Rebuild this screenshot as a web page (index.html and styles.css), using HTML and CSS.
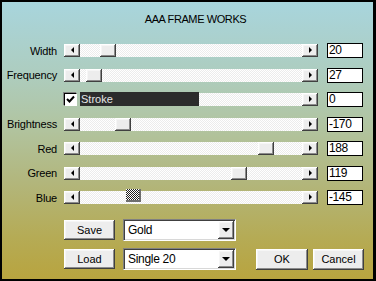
FILE: index.html
```html
<!DOCTYPE html>
<html lang="en">
<head>
    <meta charset="UTF-8">
    <title>AAA Frame Works</title>
    <link rel="stylesheet" href="styles.css">
</head>
<body>
    <div class="window">
        <div class="title">AAA FRAME WORKS</div>

        <!-- Slider rows -->
        <div class="rows">
            <div class="row">
                <span class="label">Width</span>
                <div class="scroll">
                    <span class="btn arrow-btn"><i class="arrow-left"></i></span>
                    <span class="track"><span class="thumb" style="left: 20px"></span></span>
                    <span class="btn arrow-btn"><i class="arrow-right"></i></span>
                </div>
                <span class="value">20</span>
            </div>
            <div class="row">
                <span class="label">Frequency</span>
                <div class="scroll">
                    <span class="btn arrow-btn"><i class="arrow-left"></i></span>
                    <span class="track"><span class="thumb" style="left: 6px"></span></span>
                    <span class="btn arrow-btn"><i class="arrow-right"></i></span>
                </div>
                <span class="value">27</span>
            </div>
            <div class="row">
                <span class="label"></span>
                <div class="scroll">
                    <span class="checkbox">
                        <svg width="9" height="9" viewBox="0 0 9 9"><polyline points="1,4 3.5,6.5 8,1.5" fill="none" stroke="#000" stroke-width="2"/></svg>
                    </span>
                    <span class="track"><span class="stroke-bar">Stroke</span></span>
                    <span class="btn arrow-btn"><i class="arrow-right"></i></span>
                </div>
                <span class="value">0</span>
            </div>
            <div class="row">
                <span class="label">Brightness</span>
                <div class="scroll">
                    <span class="btn arrow-btn"><i class="arrow-left"></i></span>
                    <span class="track"><span class="thumb" style="left: 35px"></span></span>
                    <span class="btn arrow-btn"><i class="arrow-right"></i></span>
                </div>
                <span class="value">-170</span>
            </div>
            <div class="row">
                <span class="label">Red</span>
                <div class="scroll">
                    <span class="btn arrow-btn"><i class="arrow-left"></i></span>
                    <span class="track"><span class="thumb" style="left: 178px"></span></span>
                    <span class="btn arrow-btn"><i class="arrow-right"></i></span>
                </div>
                <span class="value">188</span>
            </div>
            <div class="row">
                <span class="label">Green</span>
                <div class="scroll">
                    <span class="btn arrow-btn"><i class="arrow-left"></i></span>
                    <span class="track"><span class="thumb" style="left: 151px"></span></span>
                    <span class="btn arrow-btn"><i class="arrow-right"></i></span>
                </div>
                <span class="value">119</span>
            </div>
            <div class="row">
                <span class="label">Blue</span>
                <div class="scroll">
                    <span class="btn arrow-btn"><i class="arrow-left"></i></span>
                    <span class="track"><span class="thumb focused" style="left: 46px"></span></span>
                    <span class="btn arrow-btn"><i class="arrow-right"></i></span>
                </div>
                <span class="value">-145</span>
            </div>
        </div>

        <!-- Presets and dialog buttons -->
        <div class="actions">
            <div class="action-row">
                <button class="btn push save-btn">Save</button>
                <div class="combo">
                    <span class="combo-text">Gold</span>
                    <span class="btn combo-btn"><i class="arrow-down"></i></span>
                </div>
            </div>
            <div class="action-row">
                <button class="btn push load-btn">Load</button>
                <div class="combo">
                    <span class="combo-text">Single 20</span>
                    <span class="btn combo-btn"><i class="arrow-down"></i></span>
                </div>
                <button class="btn push ok-btn">OK</button>
                <button class="btn push cancel-btn">Cancel</button>
            </div>
        </div>
    </div>
</body>
</html>
```

FILE: styles.css
```css
body {
    margin: 0;
    font-family: "Liberation Sans", Arial, sans-serif;
    font-size: 11px;
    color: #000;
}

.window {
    width: 376px;
    height: 281px;
    box-sizing: border-box;
    border: 2px solid #000;
    border-right-width: 3px;
    background: linear-gradient(#a8d5dd 0%, #adcdc0 25%, #b1c4a0 45%, #b2b67c 65%, #b5ab55 85%, #b8a43f 100%);
}

.title {
    height: 41px;
    box-sizing: border-box;
    padding: 11px 0 0 16px;
    line-height: 13px;
    text-align: center;
    font-size: 11px;
    letter-spacing: -0.4px;
}

.rows {
    display: flex;
    flex-direction: column;
    gap: 9.5px;
}

.row {
    display: flex;
    align-items: center;
    height: 15px;
}

.label {
    width: 55px;
    margin-right: 7px;
    text-align: right;
    letter-spacing: -0.2px;
}

.scroll {
    display: flex;
    width: 254px;
    height: 13px;
    margin-right: 9px;
}

.btn {
    background: #ededed;
    box-shadow: inset -1px -1px #404040, inset 1px 1px #fff, inset -2px -2px #8c8c8c, inset 2px 2px #f6f6f6;
}

.arrow-btn {
    width: 16px;
    height: 13px;
    display: flex;
    align-items: center;
    justify-content: center;
}

.arrow-left {
    border-top: 3px solid transparent;
    border-bottom: 3px solid transparent;
    border-right: 3px solid #000;
    margin-top: -1px;
}

.arrow-right {
    border-top: 3px solid transparent;
    border-bottom: 3px solid transparent;
    border-left: 3px solid #000;
    margin-top: -1px;
}

.track {
    position: relative;
    flex: 1;
    background: repeating-conic-gradient(#fff 0 25%, #ececec 0 50%) 0 0 / 2px 2px;
}

.thumb {
    position: absolute;
    top: 0;
    width: 16px;
    height: 13px;
    background: #ededed;
    box-shadow: inset -1px -1px #404040, inset 1px 1px #fff, inset -2px -2px #8c8c8c, inset 2px 2px #f6f6f6;
}

.thumb.focused {
    top: -2px;
    width: 15px;
    background: repeating-conic-gradient(#222 0 25%, #fff 0 50%) 0 0 / 2px 2px;
    box-shadow: inset -2px -2px #6e6e6e;
}

.checkbox {
    width: 13px;
    height: 13px;
    box-sizing: border-box;
    margin-right: 3px;
    background: #fff;
    border: 1px solid #000;
    border-right-color: #fff;
    border-bottom-color: #fff;
    box-shadow: -1px -1px #808080;
    display: flex;
    align-items: center;
    justify-content: center;
}

.stroke-bar {
    display: block;
    width: 119px;
    height: 14px;
    margin-top: -1px;
    padding-left: 1px;
    box-sizing: border-box;
    background: #2c2c2c;
    color: #e6e6e6;
    line-height: 14px;
}

.value {
    width: 36px;
    height: 15px;
    box-sizing: border-box;
    border: 1px solid #000;
    background: #fff;
    padding-left: 1px;
    line-height: 13px;
    font-size: 12px;
    letter-spacing: -0.4px;
}

.actions {
    margin-top: 14px;
    padding-left: 62px;
    display: flex;
    flex-direction: column;
    gap: 7px;
}

.action-row {
    display: flex;
    align-items: center;
    height: 22px;
}

button {
    border: none;
    padding: 0;
    font-family: inherit;
    font-size: 11px;
    color: #000;
}

.push {
    width: 51px;
    height: 20px;
    margin-right: 8px;
}

.ok-btn {
    width: 52px;
    height: 21px;
    margin-left: 20px;
    margin-right: 5px;
}

.cancel-btn {
    width: 51px;
    height: 21px;
    margin-right: 0;
}

.combo {
    display: flex;
    align-items: center;
    justify-content: space-between;
    width: 113px;
    height: 22px;
    box-sizing: border-box;
    background: #fff;
    border: 1px solid #808080;
    border-right-color: #fff;
    border-bottom-color: #fff;
    box-shadow: inset 1px 1px #404040, inset -1px -1px #d8d8d8;
    padding: 1px 1px 1px 4px;
}

.combo-text {
    font-size: 12px;
    letter-spacing: -0.3px;
}

.combo-btn {
    width: 16px;
    height: 18px;
    display: flex;
    align-items: center;
    justify-content: center;
}

.arrow-down {
    border-left: 4px solid transparent;
    border-right: 4px solid transparent;
    border-top: 4px solid #000;
}
```
